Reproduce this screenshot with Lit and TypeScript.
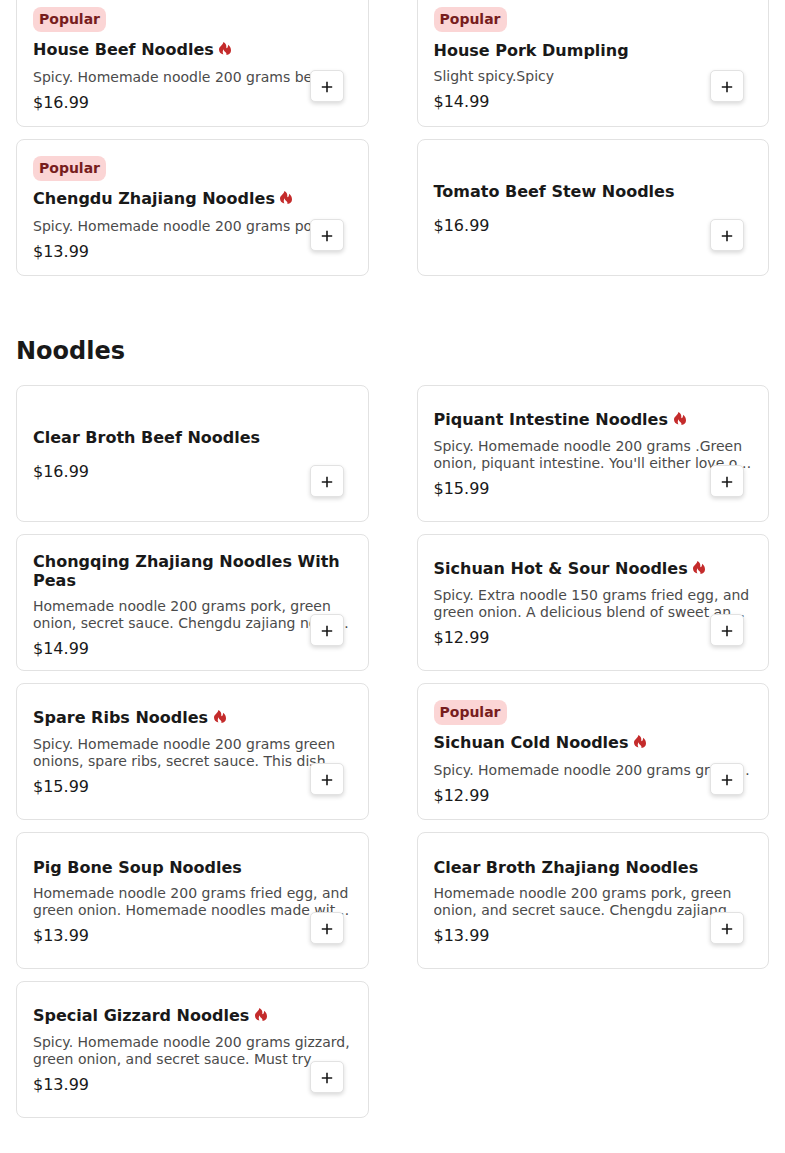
import { LitElement, html, css, svg, nothing } from "lit";
import { customElement, property } from "lit/decorators.js";

interface Dish {
  name: string;
  price: string;
  text?: string;
  popular?: boolean;
  spicy?: boolean;
}

const popular: Dish[] = [
  { name: "House Beef Noodles", price: "$16.99", popular: true, spicy: true, text: "Spicy. Homemade noodle 200 grams beef, cilantro, green onion, and secret sauce." },
  { name: "House Pork Dumpling", price: "$14.99", popular: true, text: "Slight spicy.Spicy" },
  { name: "Chengdu Zhajiang Noodles", price: "$13.99", popular: true, spicy: true, text: "Spicy. Homemade noodle 200 grams pork, green onion, and secret sauce." },
  { name: "Tomato Beef Stew Noodles", price: "$16.99" },
];

const noodles: Dish[] = [
  { name: "Clear Broth Beef Noodles", price: "$16.99" },
  { name: "Piquant Intestine Noodles", price: "$15.99", spicy: true, text: "Spicy. Homemade noodle 200 grams .Green onion, piquant intestine. You'll either love or hate this dish." },
  { name: "Chongqing Zhajiang Noodles With Peas", price: "$14.99", text: "Homemade noodle 200 grams pork, green onion, secret sauce. Chengdu zajiang noodle with peas." },
  { name: "Sichuan Hot & Sour Noodles", price: "$12.99", spicy: true, text: "Spicy. Extra noodle 150 grams fried egg, and green onion. A delicious blend of sweet and sour flavors." },
  { name: "Spare Ribs Noodles", price: "$15.99", spicy: true, text: "Spicy. Homemade noodle 200 grams green onions, spare ribs, secret sauce. This dish features tender ribs." },
  { name: "Sichuan Cold Noodles", price: "$12.99", popular: true, spicy: true, text: "Spicy. Homemade noodle 200 grams green onion and secret sauce." },
  { name: "Pig Bone Soup Noodles", price: "$13.99", text: "Homemade noodle 200 grams fried egg, and green onion. Homemade noodles made with pig bone soup." },
  { name: "Clear Broth Zhajiang Noodles", price: "$13.99", text: "Homemade noodle 200 grams pork, green onion, and secret sauce. Chengdu zajiang noodles in clear broth." },
  { name: "Special Gizzard Noodles", price: "$13.99", spicy: true, text: "Spicy. Homemade noodle 200 grams gizzard, green onion, and secret sauce. Must try" },
];

const flame = svg`<path d="M4.4 0C6.6 1.2 7.6 3 7.3 5.2C7.2 6 7.6 6.4 8.1 6C8.8 5.4 9 4.2 9.2 2.8C11 4.2 12 6.2 12 8.4C12 10.8 10.4 12.6 7.4 13C7.8 11.8 7.2 10.8 6 9.8C5.2 9.1 4.7 8.2 4.8 7.2C3.7 8.4 3.3 10.4 4.4 12.6C1.6 12 0 10.2 0 7.6C0 4.6 3.8 3.4 4.4 0Z"/>`;

@customElement("dish-card")
export class DishCard extends LitElement {
  @property({ attribute: false }) dish!: Dish;

  static styles = css`
    :host {
      display: block;
      min-width: 0;
    }
    .card {
      position: relative;
      box-sizing: border-box;
      height: 137px;
      padding: 16px;
      border: 1px solid #e2e2e2;
      border-radius: 8px;
      background: #fff;
      display: flex;
      flex-direction: column;
      align-items: flex-start;
      justify-content: safe center;
    }
    .card > * {
      flex: none;
    }
    .badge {
      margin-bottom: 8px;
      padding: 0 6px;
      border-radius: 8px;
      background: #fbd5d5;
      color: #771d1d;
      font-size: 14px;
      line-height: 25px;
      font-weight: 700;
    }
    .name {
      margin: 0 0 8px;
      padding-top: 1px;
      font-size: 16px;
      line-height: 19px;
      font-weight: 700;
    }
    .spicy {
      padding: 0 0 1px;
    }
    .badge ~ .spicy {
      padding-bottom: 2px;
    }
    .flame {
      width: 12px;
      height: 13px;
      fill: #c42b2b;
    }
    .text {
      margin: 0;
      font-size: 14px;
      line-height: 17px;
      color: #4b4b4b;
      display: -webkit-box;
      -webkit-box-orient: vertical;
      -webkit-line-clamp: 2;
      overflow: hidden;
    }
    .one {
      -webkit-line-clamp: 1;
    }
    .price {
      margin: 7px 0 0;
      font-size: 16px;
      line-height: 19px;
    }
    .add {
      position: absolute;
      right: 24px;
      bottom: 24px;
      width: 34px;
      height: 32px;
      padding: 2px 0 0;
      display: grid;
      place-items: center;
      border: 1px solid #e2e2e2;
      border-radius: 5px;
      background: #fff;
      box-shadow: 0 2px 4px rgba(0, 0, 0, 0.15);
      color: #191919;
      cursor: pointer;
    }
    .plus {
      width: 12px;
      height: 12px;
      fill: none;
      stroke: currentColor;
      stroke-width: 1.6;
    }
  `;

  render() {
    const d = this.dish;
    return html`<article class="card">
      ${d.popular ? html`<span class="badge">Popular</span>` : nothing}
      <h3 class="name ${d.spicy ? "spicy" : ""}">${d.name}${d.spicy
        ? html` <svg class="flame" viewBox="0 0 12 13" role="img" aria-label="Spicy">${flame}</svg>`
        : nothing}</h3>
      <p class="text ${d.popular ? "one" : ""}">${d.text ?? ""}</p>
      <p class="price">${d.price}</p>
      <button class="add" type="button" aria-label="Add ${d.name}">
        <svg class="plus" viewBox="0 0 12 12" aria-hidden="true"><path d="M6 0.8V11.2M0.8 6H11.2" /></svg>
      </button>
    </article>`;
  }
}

@customElement("app-root")
export class AppRoot extends LitElement {
  static styles = css`
    :host {
      display: block;
      overflow: hidden;
      padding: 0 16px 36px;
      background: #fff;
      color: #191919;
      font-family: "DejaVu Sans", sans-serif;
    }
    .grid {
      display: grid;
      grid-template-columns: repeat(2, minmax(0, 1fr));
      gap: 12px 48px;
    }
    .scrolled {
      margin-top: -10px;
    }
    .title {
      margin: 61px 0 20px;
      font-size: 24px;
      line-height: 28px;
      font-weight: 700;
    }
  `;

  render() {
    const cards = (list: Dish[]) => list.map((d) => html`<dish-card .dish=${d}></dish-card>`);
    return html`
      <section class="grid scrolled">${cards(popular)}</section>
      <section>
        <h2 class="title">Noodles</h2>
        <div class="grid">${cards(noodles)}</div>
      </section>
    `;
  }
}
